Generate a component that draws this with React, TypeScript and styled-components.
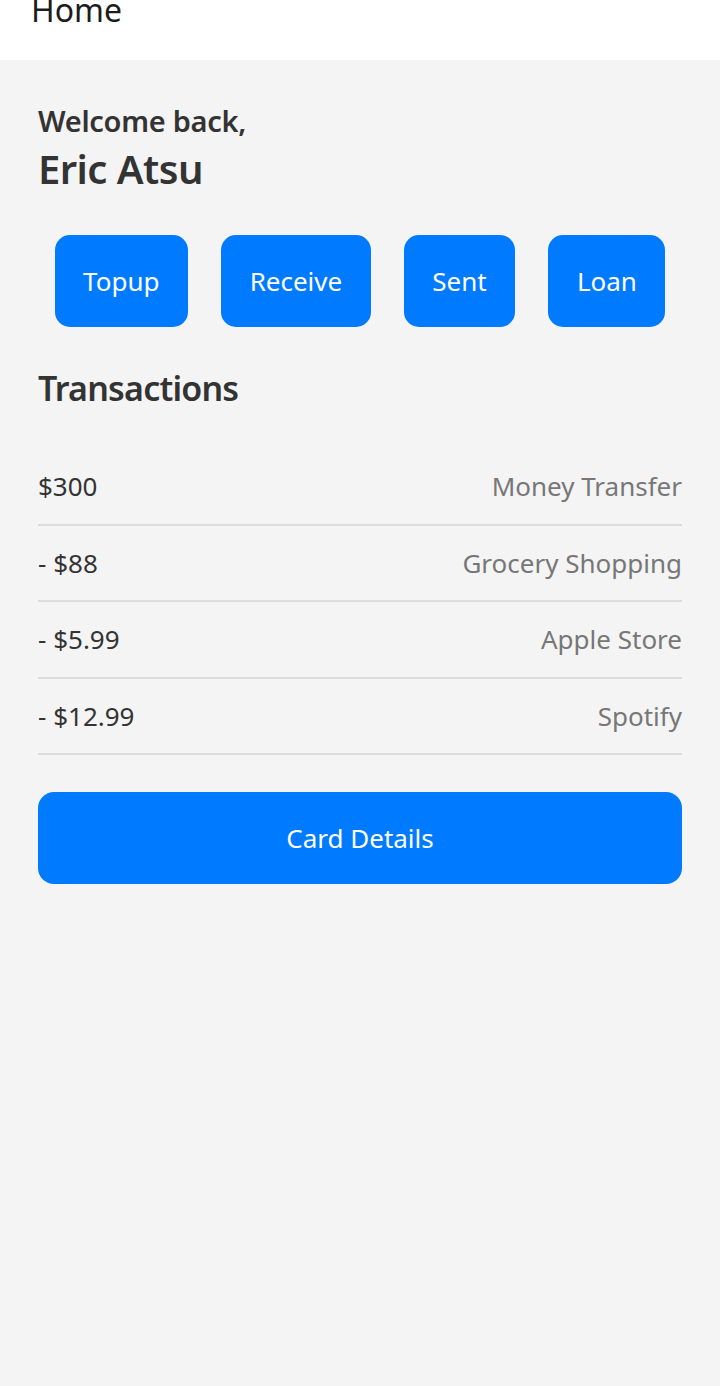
import React from "react";
import styled, { createGlobalStyle } from "styled-components";

const Global = createGlobalStyle`
  html, body { margin: 0; padding: 0; }
  body {
    background: #f4f4f4;
    font-family: "Noto Sans", "Open Sans", sans-serif;
    -webkit-font-smoothing: antialiased;
  }
`;

const Screen = styled.div`
  min-height: 1386px;
  display: flex;
  flex-direction: column;
  background: #f4f4f4;
`;

const Header = styled.header`
  height: 60px;
  background: #ffffff;
  overflow: hidden;
  padding-left: 31px;
  box-sizing: border-box;
`;

const HeaderTitle = styled.h1`
  margin: -6px 0 0;
  font-size: 32px;
  line-height: 32px;
  font-weight: 400;
  color: #1c1c1c;
`;

const Content = styled.main`
  padding: 41px 38px 0;
  display: flex;
  flex-direction: column;
`;

const Welcome = styled.div`
  font-size: 29px;
  font-weight: 600;
  letter-spacing: -0.3px;
  color: #333;
  line-height: 40px;
`;

const Name = styled.div`
  font-size: 40px;
  font-weight: 600;
  letter-spacing: -0.55px;
  color: #333;
  line-height: 56px;
`;

const ActionRow = styled.div`
  display: flex;
  justify-content: space-around;
  margin-top: 38px;
`;

const ActionButton = styled.button`
  height: 92px;
  padding: 0 28.5px;
  border: none;
  border-radius: 15px;
  background: #007aff;
  color: #fff;
  font-family: inherit;
  font-size: 26px;
  font-weight: 400;
`;

const SectionTitle = styled.h2`
  margin: 38px 0 0;
  font-size: 34px;
  font-weight: 600;
  letter-spacing: -0.8px;
  color: #333;
  line-height: 46px;
`;

const List = styled.div`
  margin-top: 38px;
  display: flex;
  flex-direction: column;
`;

const Row = styled.div`
  display: flex;
  justify-content: space-between;
  align-items: center;
  height: 74.5px;
  border-bottom: 2px solid #dcdcdc;
`;

const Amount = styled.span`
  font-size: 26px;
  color: #333;
`;

const Label = styled.span`
  font-size: 26px;
  color: #777;
`;

const PrimaryButton = styled.button`
  margin-top: 37px;
  height: 92px;
  border: none;
  border-radius: 16px;
  background: #007aff;
  color: #fff;
  font-family: inherit;
  font-size: 26px;
`;

const actions = ["Topup", "Receive", "Sent", "Loan"];
const transactions = [
  { amount: "$300", label: "Money Transfer" },
  { amount: "- $88", label: "Grocery Shopping" },
  { amount: "- $5.99", label: "Apple Store" },
  { amount: "- $12.99", label: "Spotify" },
];

export default function App() {
  return (
    <>
      <Global />
      <Screen>
        <Header>
          <HeaderTitle>Home</HeaderTitle>
        </Header>
        <Content>
          <Welcome>Welcome back,</Welcome>
          <Name>Eric Atsu</Name>
          <ActionRow>
            {actions.map((a) => (
              <ActionButton key={a}>{a}</ActionButton>
            ))}
          </ActionRow>
          <SectionTitle>Transactions</SectionTitle>
          <List>
            {transactions.map((t) => (
              <Row key={t.label}>
                <Amount>{t.amount}</Amount>
                <Label>{t.label}</Label>
              </Row>
            ))}
          </List>
          <PrimaryButton>Card Details</PrimaryButton>
        </Content>
      </Screen>
    </>
  );
}
